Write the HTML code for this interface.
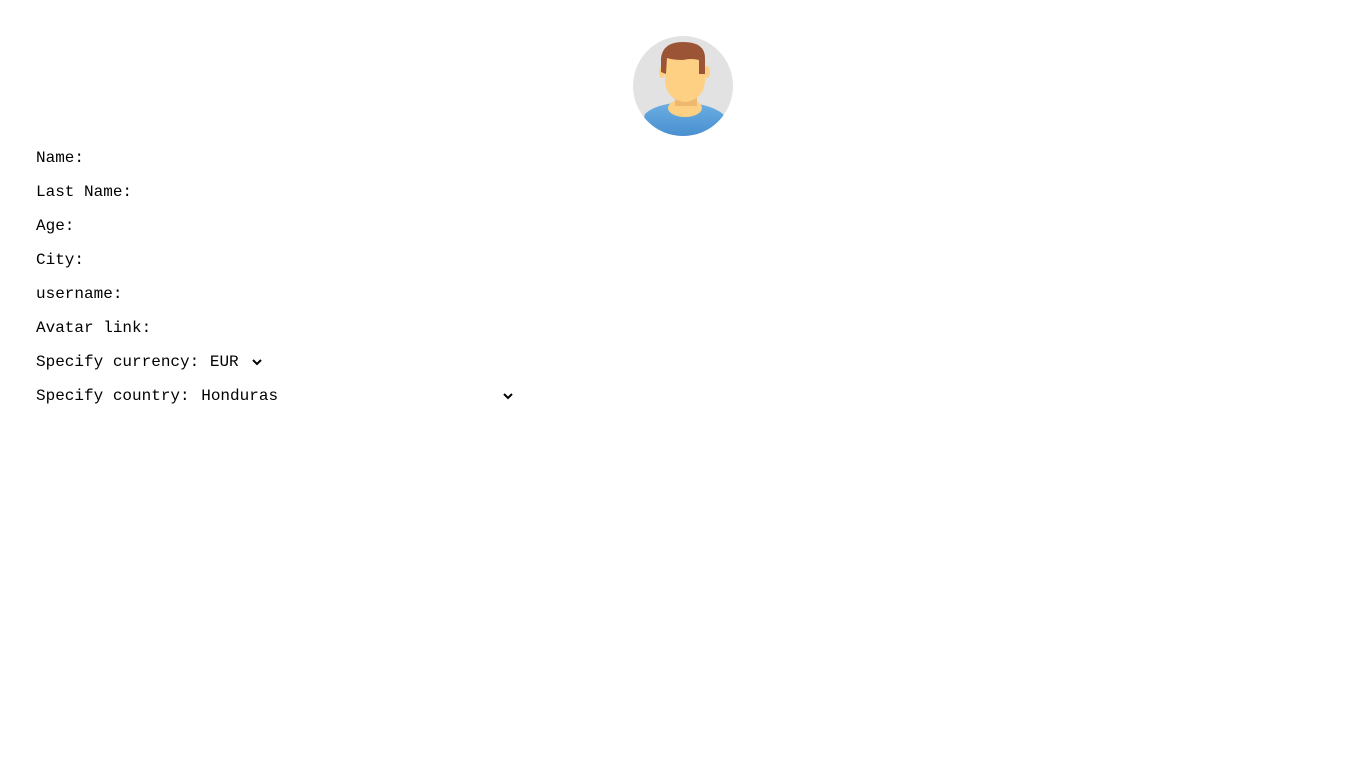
<!DOCTYPE html>
<html><head><style>
body{margin:0;background:#fff;font-family:"Liberation Mono",monospace;font-size:16px;color:#000}
.l{position:absolute;left:36px;line-height:20px;white-space:pre}
.chev{position:absolute;width:12px;height:8px}
</style></head><body>
<svg style="position:absolute;left:633px;top:36px" width="100" height="100" viewBox="0 0 100 100">
<defs><clipPath id="c"><circle cx="50" cy="50" r="50"/></clipPath>
<linearGradient id="g" x1="0" y1="0" x2="0" y2="1"><stop offset="0" stop-color="#6aaee3"/><stop offset="1" stop-color="#4a8fd0"/></linearGradient></defs>
<circle cx="50" cy="50" r="50" fill="#e2e2e2"/>
<g clip-path="url(#c)">
<path d="M12 78 Q20 70 40 67 L60 67 Q80 70 90 78 L94 100 L6 100Z" fill="url(#g)"/>
<ellipse cx="52" cy="72" rx="17" ry="9" fill="#fdd083"/>
<rect x="42" y="52" width="22" height="18" fill="#eeb96e"/>
<ellipse cx="29" cy="36" rx="3" ry="6" fill="#fdd083"/>
<ellipse cx="74" cy="36" rx="3" ry="6" fill="#fdd083"/>
<path d="M32 24 Q32 18 40 18 L64 18 Q72 18 72 24 L72 46 Q70 64 52 66 Q34 64 32 46Z" fill="#fdd083"/>
<path d="M28 36 L28 22 Q30 6 50 6 Q72 6 72 22 L72 38 L66 38 L66 24 Q58 22 50 24 Q40 24 34 22 L33 38Z" fill="#9c5437"/>
</g></svg>
<div class="l" style="top:148px">Name:</div>
<div class="l" style="top:182px">Last Name:</div>
<div class="l" style="top:216px">Age:</div>
<div class="l" style="top:250px">City:</div>
<div class="l" style="top:284px">username:</div>
<div class="l" style="top:318px">Avatar link:</div>
<div class="l" style="top:352px">Specify currency:<span style="margin-left:1px"> EUR</span></div>
<div class="l" style="top:386px">Specify country:<span style="margin-left:2px"> Honduras</span></div>
<svg class="chev" style="left:251px;top:358px" viewBox="0 0 12 8"><path d="M2 2 L6 6 L10 2" fill="none" stroke="#000" stroke-width="2"/></svg>
<svg class="chev" style="left:502px;top:392px" viewBox="0 0 12 8"><path d="M2 2 L6 6 L10 2" fill="none" stroke="#000" stroke-width="2"/></svg>
</body></html>
